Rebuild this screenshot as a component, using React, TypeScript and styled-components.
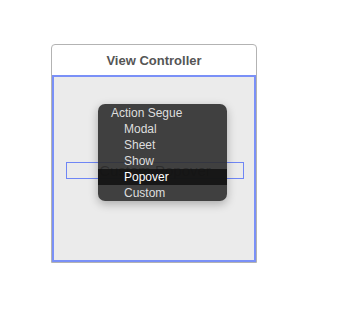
import React from 'react'
import styled, { createGlobalStyle } from 'styled-components'

const GlobalStyle = createGlobalStyle`
  html, body {
    margin: 0;
    padding: 0;
    background: #ffffff;
    font-family: 'Liberation Sans', Arial, sans-serif;
  }
`

const Canvas = styled.div`
  width: 364px;
  height: 324px;
  padding: 44px 0 0 51px;
  box-sizing: border-box;
`

const Scene = styled.div`
  position: relative;
  width: 206px;
  height: 219px;
  box-sizing: border-box;
  border: 1px solid #b3b3b3;
  border-radius: 4px 4px 0 0;
  display: flex;
  flex-direction: column;
  background: #ffffff;
`

const SceneTitle = styled.div`
  height: 30px;
  display: flex;
  align-items: center;
  justify-content: center;
  font-size: 13px;
  font-weight: bold;
  color: #555555;
  padding-top: 1px;
  box-sizing: border-box;
`

const SceneBody = styled.div`
  flex: 1;
  border: 2px solid #7a90f7;
  background: #ebebeb;
  padding: 85px 10px 0 12px;
  box-sizing: border-box;
`

const SegueBox = styled.div`
  height: 17px;
  border: 1px solid #6f86f5;
  box-sizing: border-box;
  display: flex;
  align-items: center;
  justify-content: center;
  font-size: 15px;
  color: #3a3a3a;
`

const Menu = styled.div`
  position: absolute;
  left: 46px;
  top: 59px;
  width: 129px;
  padding: 1px 0 0;
  border-radius: 7px;
  background: rgba(46, 46, 46, 0.9);
  box-shadow: 0 3px 10px rgba(0, 0, 0, 0.28);
  overflow: hidden;
`

const MenuItem = styled.div<{ $header?: boolean; $active?: boolean }>`
  height: 16px;
  line-height: 16px;
  padding-left: ${(p) => (p.$header ? '13px' : '26px')};
  font-size: 12px;
  color: ${(p) => (p.$active ? '#ffffff' : '#dedede')};
  background: ${(p) => (p.$active ? 'rgba(16, 16, 16, 0.85)' : 'transparent')};
`

const items = ['Modal', 'Sheet', 'Show', 'Popover', 'Custom']

const App: React.FC = () => {
  return (
    <>
      <GlobalStyle />
      <Canvas>
        <Scene>
          <SceneTitle>View Controller</SceneTitle>
          <SceneBody>
            <SegueBox>Custom Popover</SegueBox>
          </SceneBody>
          <Menu>
            <MenuItem $header>Action Segue</MenuItem>
            {items.map((name) => (
              <MenuItem key={name} $active={name === 'Popover'}>
                {name}
              </MenuItem>
            ))}
          </Menu>
        </Scene>
      </Canvas>
    </>
  )
}

export default App
